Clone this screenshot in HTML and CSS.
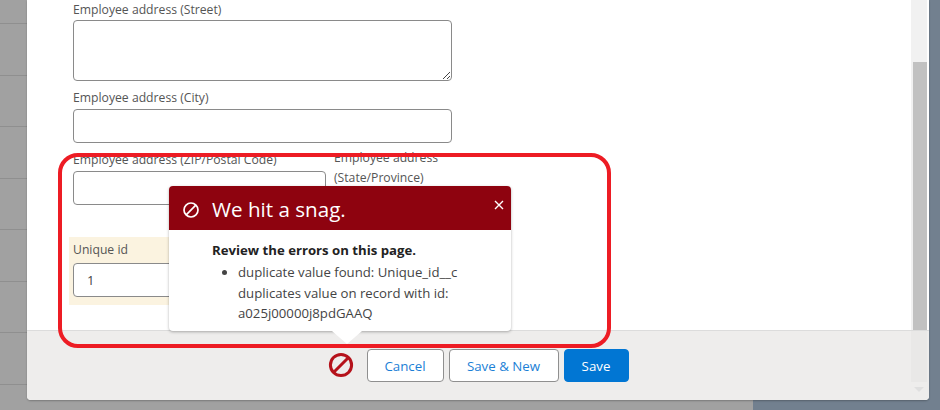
FILE: index.html
```html
<!DOCTYPE html>
<html lang="en">
<head>
<meta charset="utf-8">
<title>Edit record</title>
<link rel="stylesheet" href="styles.css">
</head>
<body>
<div class="backdrop">
  <div class="table-side">
    <div class="row r1"></div><div class="row"></div><div class="row"></div><div class="row"></div><div class="row"></div><div class="row"></div><div class="row"></div><div class="row"></div>
  </div>
  <div class="slate-side"></div>
</div>
<div class="modal">
  <div class="body">
    <form class="form">
      <div class="field first">
        <label class="label">Employee address (Street)</label>
        <div class="control textarea">
          <svg class="grip" width="10" height="10" viewBox="0 0 10 10"><path d="M9 2 2 9M9 6 6 9" stroke="#444" stroke-width="1" fill="none"/></svg>
        </div>
      </div>
      <div class="field city">
        <label class="label">Employee address (City)</label>
        <div class="control"></div>
      </div>
      <div class="pair">
        <div class="field zip">
          <label class="label">Employee address (ZIP/Postal Code)</label>
          <div class="control"></div>
        </div>
        <div class="state">
          <label class="label wrap">Employee address (State/Province)</label>
        </div>
      </div>
      <div class="highlight">
        <label class="label">Unique id</label>
        <div class="control value">1</div>
      </div>
    </form>
    <div class="scrollbar"><div class="thumb"></div></div>
  </div>
  <div class="footer">
    <svg class="stop" width="26" height="26" viewBox="0 0 26 26"><circle cx="13" cy="13" r="10.6" fill="none" stroke="#b5121b" stroke-width="3"/><path d="M5.5 20.5 20.5 5.5" stroke="#b5121b" stroke-width="3"/></svg>
    <button class="btn cancel" type="button">Cancel</button>
    <button class="btn savenew" type="button">Save &amp; New</button>
    <button class="btn save" type="button">Save</button>
    <span class="scroll-track"></span>
    <span class="scroll-arrow"></span>
  </div>
</div>
<div class="popover">
  <div class="pop-head">
    <svg class="pop-icon" width="18" height="18" viewBox="0 0 18 18"><circle cx="9" cy="9" r="7" fill="none" stroke="#fff" stroke-width="1.7"/><path d="M4.2 13.8 13.8 4.2" stroke="#fff" stroke-width="1.7"/></svg>
    <h2 class="pop-title">We hit a snag.</h2>
    <svg class="pop-close" width="10" height="10" viewBox="0 0 10 10"><path d="M1 1 9 9M9 1 1 9" stroke="#fff" stroke-width="1.4"/></svg>
  </div>
  <div class="pop-body">
    <p class="pop-lead">Review the errors on this page.</p>
    <ul class="pop-list"><li>duplicate value found: Unique_id__c duplicates value on record with id: a025j00000j8pdGAAQ</li></ul>
  </div>
  <span class="pop-arrow"></span>
</div>
<div class="annotation"></div>
</body>
</html>
```
FILE: styles.css
```css
* { box-sizing: border-box; }
html, body { margin: 0; height: 100%; overflow: hidden; }
body { font-family: "Open Sans", "Noto Sans", sans-serif; font-size: 12px; color: #444; width: 940px; height: 410px; position: relative; }

.backdrop { display: flex; width: 940px; height: 410px; }
.table-side { width: 753px; background: #a1a1a1; }
.slate-side { flex: 1; background: #72808f; }
.row { height: 51.5px; border-bottom: 1px solid #8f8f8f; }
.r1 { height: 24px; }

.modal { position: absolute; left: 27px; top: 0; width: 902px; height: 400px; display: flex; flex-direction: column; border-radius: 0 0 4px 4px; overflow: hidden; background: #fff; box-shadow: 0 1px 2px rgba(0,0,0,.25); }
.body { flex: 1; display: flex; min-height: 0; }
.form { flex: 1; padding: 0 0 0 46px; }
.scrollbar { width: 16px; margin-right: 2px; background: #f1f1f1; padding: 62px 0 0 2px; }
.thumb { height: 100%; background: #c1c1c1; }

.label { display: block; font-size: 12.2px; line-height: 16px; color: #555; }
.field .label { margin-bottom: 3px; }
.control { width: 379px; height: 34px; border: 1px solid #8a8a8a; border-radius: 4px; background: #fff; }
.textarea { height: 61px; position: relative; }
.grip { position: absolute; right: 0; bottom: 0; }
.first { padding-top: 2px; }
.first .label { margin-bottom: 2px; }
.city { margin-top: 9px; }
.pair { display: flex; margin-top: 9px; height: 85px; }
.zip { width: 261px; }
.zip .control { width: 253px; }
.state { width: 120px; margin-top: -4px; }
.wrap { line-height: 20px; }
.highlight { margin-left: -4px; width: 262px; height: 68px; background: #fbf3e0; padding: 5px 4px 0; }
.highlight .label { margin-bottom: 5px; }
.value { width: 253px; height: 34px; padding-left: 13px; line-height: 33px; font-size: 13px; }

.footer { height: 70px; flex: none; display: flex; justify-content: center; align-items: flex-start; gap: 5px; padding-top: 18px; background: #eeedec; border-top: 1px solid #dcdcdc; position: relative; }
.stop { margin: 3px 8px 0 0; }
.btn { height: 33px; border-radius: 4px; border: 1px solid #8f8f8f; background: #fff; color: #1b7fd6; font: 13.3px "Open Sans", "Noto Sans", sans-serif; padding: 0; }
.cancel { width: 77px; }
.savenew { width: 110px; }
.save { width: 65px; background: #0176d3; border-color: #0176d3; color: #fff; }
.scroll-track { position: absolute; right: 2px; top: 0; width: 16px; height: 51px; background: rgba(0,0,0,.02); }
.scroll-arrow { position: absolute; right: 5px; bottom: 8px; border-left: 5px solid transparent; border-right: 5px solid transparent; border-top: 5px solid #dfdfdf; }

.popover { position: absolute; left: 169px; top: 186px; width: 342px; height: 145px; background: #fff; border-radius: 4px; box-shadow: 0 1px 3px rgba(0,0,0,.3); }
.pop-head { height: 44px; background: #8e030f; border-radius: 4px 4px 0 0; display: flex; align-items: center; padding: 3px 7px 0 13px; color: #fff; }
.pop-icon { flex: none; }
.pop-title { flex: 1; margin: -2px 0 0 12px; font-size: 20.6px; font-weight: 400; line-height: 26px; }
.pop-close { align-self: flex-start; margin-top: 11px; }
.pop-body { padding: 12px 40px 0 43px; position: relative; background: #fff; }
.pop-lead { margin: 0; font-size: 13.2px; font-weight: 700; line-height: 17px; color: #222; }
.pop-list { margin: 3px 0 0; padding: 0 0 0 26px; font-size: 13.2px; line-height: 20.5px; color: #444; }
.pop-arrow { position: absolute; left: 163px; bottom: -13px; width: 0; height: 0; border-left: 15px solid transparent; border-right: 15px solid transparent; border-top: 13px solid #fff; }

.annotation { position: absolute; left: 58px; top: 153px; width: 553px; height: 195px; border: 4px solid #ed1c24; border-radius: 20px; pointer-events: none; }
```
